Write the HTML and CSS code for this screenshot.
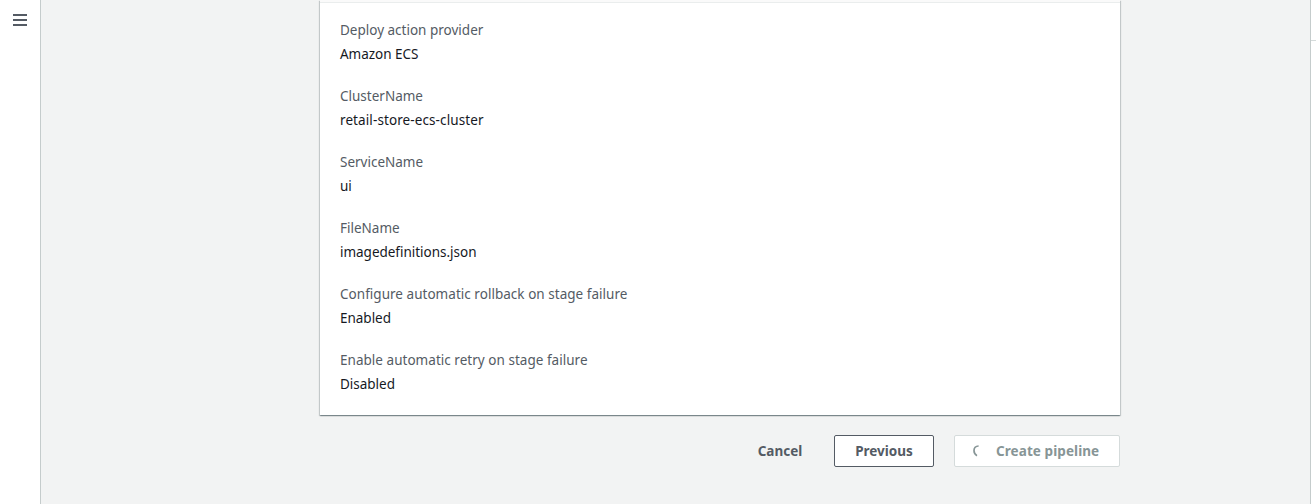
FILE: index.html
```html
<!DOCTYPE html>
<html lang="en">
<head>
<meta charset="utf-8">
<title>Create pipeline</title>
<link rel="stylesheet" href="styles.css">
</head>
<body>
<div class="app">
  <nav class="side-nav">
    <button class="menu-toggle" aria-label="Open navigation">
      <svg width="14" height="12" viewBox="0 0 14 12" shape-rendering="crispEdges"><path d="M0 1h14M0 6h14M0 11h14" stroke="#545b64" stroke-width="2"/></svg>
    </button>
  </nav>
  <main class="content">
    <section class="card">
      <div class="card-header"></div>
      <dl class="details">
        <div><dt>Deploy action provider</dt><dd>Amazon ECS</dd></div>
        <div><dt>ClusterName</dt><dd class="wide">retail-store-ecs-cluster</dd></div>
        <div><dt>ServiceName</dt><dd>ui</dd></div>
        <div><dt>FileName</dt><dd>imagedefinitions.json</dd></div>
        <div><dt class="long">Configure automatic rollback on stage failure</dt><dd>Enabled</dd></div>
        <div><dt class="long">Enable automatic retry on stage failure</dt><dd>Disabled</dd></div>
      </dl>
    </section>
    <div class="actions">
      <button class="btn link">Cancel</button>
      <button class="btn normal">Previous</button>
      <button class="btn primary" disabled>
        <svg class="spinner" width="8" height="12" viewBox="0 0 8 12"><path d="M6.600 1C3.500 1 2 3.200 2 5.600c0 2.200 1 4.100 3 5.100" fill="none" stroke="#879596" stroke-width="1.700"/></svg>
        <span>Create pipeline</span>
      </button>
    </div>
  </main>
  <aside class="tools"><div class="tools-header"></div></aside>
</div>
</body>
</html>
```

FILE: styles.css
```css
* { box-sizing: border-box; }
body {
  margin: 0;
  background: #f2f3f3;
  font: 13.5px/22px "Noto Sans", "Open Sans", sans-serif;
  color: #16191f;
}
.app { display: flex; height: 504px; overflow: hidden; }
.side-nav { flex: none; width: 41px; background: #fff; border-right: 1px solid #c5cccc; }
.menu-toggle {
  display: block;
  margin: 0;
  padding: 14px 13px;
  border: 0;
  background: none;
}
.menu-toggle svg { display: block; }
.content { flex: 1; padding: 0 190px 0 279px; }
.card {
  width: 800px;
  height: 415px;
  background: #fff;
  box-shadow: 0 1px 1px rgba(0, 28, 36, .3), 1px 1px 1px rgba(0, 28, 36, .15), -1px 1px 1px rgba(0, 28, 36, .15);
}
.card-header { height: 3px; background: #fafafa; border-bottom: 1px solid #eaeded; }
.details { display: grid; gap: 20px; margin: 0; padding: 16px 20px; }
.details div { height: 46px; }
dt, dd { margin: 0; height: 24px; }
dt { color: #545b64; }
dd { letter-spacing: -0.02px; }
.long { letter-spacing: 0.03px; }
.wide { letter-spacing: 0.1px; }
.actions { display: flex; justify-content: flex-end; margin-top: 20px; }
.btn {
  height: 32px;
  border: 1px solid #545b64;
  border-radius: 2px;
  padding: 0;
  background: #fff;
  color: #545b64;
  font: 700 13.5px/20px "Noto Sans", "Open Sans", sans-serif;
}
.btn.link { width: 88px; border-color: transparent; background: none; margin-right: 10px; }
.btn.normal { width: 100px; margin-right: 20px; }
.btn.primary {
  display: flex;
  align-items: center;
  width: 166px;
  padding-left: 17px;
  border-color: #d5dbdb;
  color: #879596;
  letter-spacing: 0.08px;
}
.spinner { margin-right: 16px; }
.tools { flex: none; width: 6px; background: #fff; border-left: 1px solid #c5cccc; }
.tools-header { height: 41px; border-bottom: 1px solid #d5dbdb; }
```
